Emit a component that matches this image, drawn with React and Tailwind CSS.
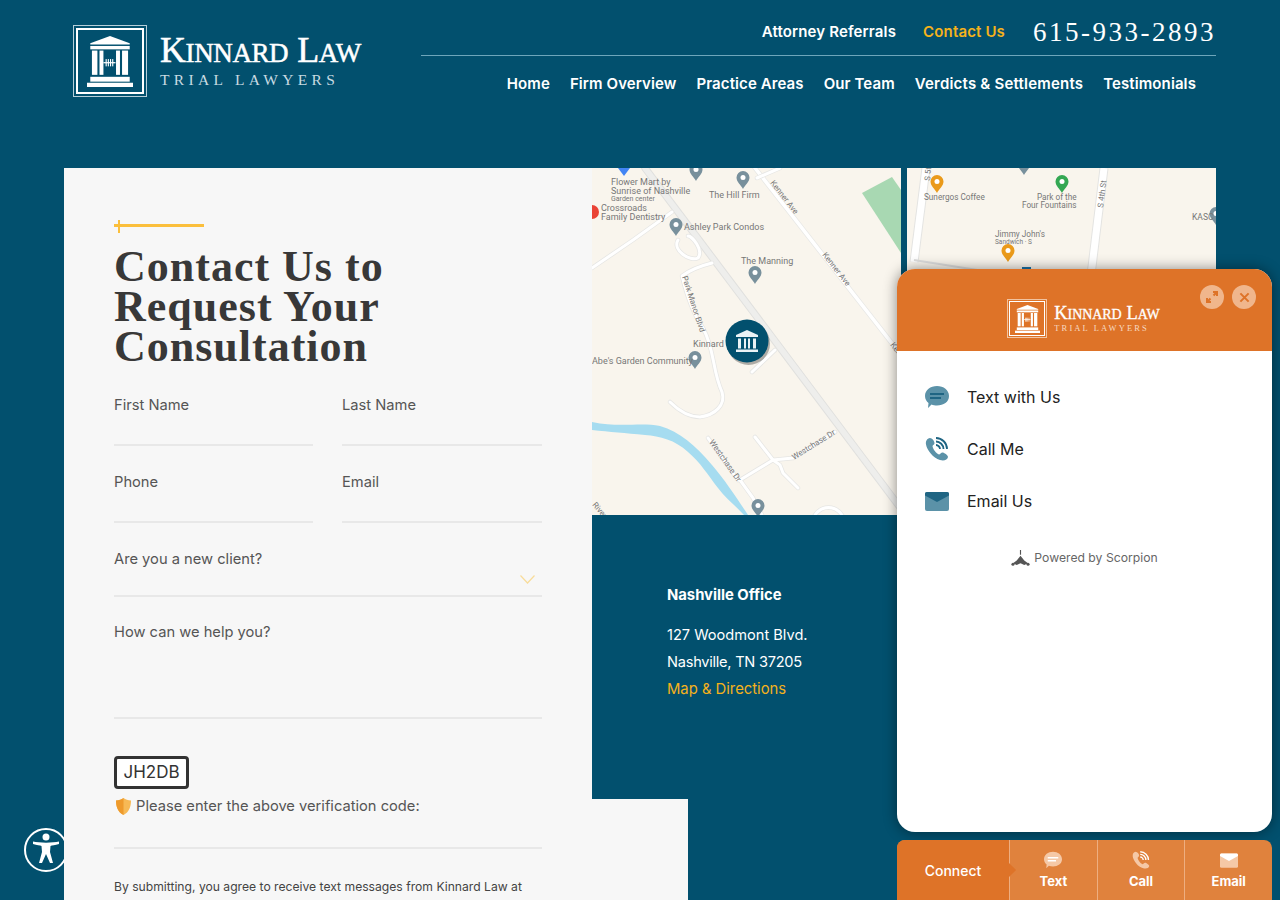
const sans = 'font-["Inter",sans-serif]';

function Temple({ className }) {
  return (
    <svg viewBox="3 5 42 42" preserveAspectRatio="none" className={className} fill="currentColor">
      <path d="M24 5 L42 11 L42 12 L6 12 L6 11 Z" />
      <rect x="6" y="13.2" width="36" height="2.8" />
      <rect x="7.5" y="17" width="5" height="20" />
      <rect x="14.4" y="17" width="3.6" height="20" />
      <rect x="29.5" y="17" width="3.6" height="20" />
      <rect x="35" y="17" width="5.5" height="20" />
      <rect x="20" y="24" width="1" height="6" />
      <rect x="22" y="24" width="1" height="6" />
      <rect x="24" y="24" width="1" height="6" />
      <rect x="26" y="24" width="1" height="6" />
      <rect x="18" y="26.5" width="11" height="1" />
      <rect x="6" y="38.6" width="36" height="4" />
      <rect x="3" y="43.5" width="42" height="3.5" />
    </svg>
  );
}

function HeaderLogo() {
  return (
    <div className="flex items-center text-white">
      <div className="w-[74px] h-[72px] border border-[#b7cfd9] p-[2px]">
        <div className="w-full h-full border-2 border-white flex items-center justify-center">
          <Temple className="w-[46px] h-[51px]" />
        </div>
      </div>
      <div className="ml-[13px] -mt-[2px] font-['Liberation_Serif',serif]">
        <div className="flex items-baseline leading-[36px] h-[34px] text-[36px] tracking-[-0.4px] [-webkit-text-stroke:0.5px_white]">
          K<span className="text-[27px]">INNARD</span>
          <span className="ml-[9px]">L</span>
          <span className="text-[27px]">AW</span>
        </div>
        <div className="text-[15.5px] leading-[16px] tracking-[4.35px] text-[#c9dbe2] mt-[6px]">TRIAL LAWYERS</div>
      </div>
    </div>
  );
}

function ChatLogo() {
  return (
    <div className="flex items-center text-white pr-[2px]">
      <div className="w-[40px] h-[39px] border border-[#f1c3a0] p-[1px]">
        <div className="w-full h-full border border-white flex items-center justify-center">
          <Temple className="w-[25px] h-[28px]" />
        </div>
      </div>
      <div className="ml-[7px] -mt-[1px] font-['Liberation_Serif',serif]">
        <div className="flex items-baseline leading-[18px] h-[17px] text-[18.5px] tracking-[-0.1px] [-webkit-text-stroke:0.3px_white]">
          K<span className="text-[14px]">INNARD</span>
          <span className="ml-[5px]">L</span>
          <span className="text-[14px]">AW</span>
        </div>
        <div className="text-[8.5px] leading-[10px] tracking-[2.1px] text-[#f7d9c2] mt-[2px]">TRIAL LAWYERS</div>
      </div>
    </div>
  );
}

function Field({ label, className, children }) {
  return (
    <div className={`border-b-2 border-[#e8e8e8] ${className}`}>
      <div className="text-[14.7px] leading-[20px] text-[#555]">{label}</div>
      {children}
    </div>
  );
}

function Pin({ x, y, color = '#78909c', s = 1 }) {
  return (
    <g transform={`translate(${x} ${y}) scale(${s})`}>
      <path d="M0 9 C-2 5 -6.5 2 -6.5 -2.5 A6.5 6.5 0 0 1 6.5 -2.5 C6.5 2 2 5 0 9 Z" fill={color} />
      <circle cx="0" cy="-2.5" r="2.5" fill="#fff" />
    </g>
  );
}

function Label({ x, y, children, size = 9, rotate, anchor, fill = '#777' }) {
  return (
    <text
      x={x}
      y={y}
      fontSize={size}
      fill={fill}
      textAnchor={anchor}
      fontFamily="Roboto, sans-serif"
      transform={rotate ? `rotate(${rotate} ${x} ${y})` : undefined}
    >
      {children}
    </text>
  );
}

const sideRoads = [
  'M592 268 L633 240 L672 212',
  'M757 178 L780 168',
  'M712 263 C700 266 690 270 682 276 C688 300 696 318 703 328 C715 350 712 370 722 392 C726 405 715 415 700 417 C688 417 678 410 670 402',
  'M678 240 C672 250 690 262 698 258 C704 250 692 236 688 236',
  'M775 350 L752 372',
  'M835 432 L793 458 L773 460 L740 480 L753 498 L762 515',
  'M755 437 L773 460 L780 465 L783 473 L798 488',
  'M708 438 L738 480',
  'M815 515 C822 505 835 505 842 515',
];

function MapLeft() {
  return (
    <svg viewBox="592 168 309 347" className="w-[309px] h-[347px] block bg-[#f9f5ed]">
      <polygon points="862,193 892,177 901,190 901,253" fill="#a8d8b2" />
      {/* water */}
      <path d="M592 422 C620 428 640 422 660 426 C680 432 695 445 712 465 C725 480 738 500 748 515 L744 515 C735 505 725 498 718 488 C708 475 700 462 688 452 C675 440 660 436 645 435 C625 433 610 432 592 430 Z" fill="#a6dcf0" />
      {/* roads */}
      <g fill="none" strokeLinecap="round" strokeLinejoin="round">
        <path d="M645 168 L905 514" stroke="#e0e0de" strokeWidth="7.5" />
        <path d="M645 168 L905 514" stroke="#eeeeec" strokeWidth="5.5" />
        <path d="M755 168 L905 360" stroke="#e8e8e6" strokeWidth="5" />
        <path d="M755 168 L905 360" stroke="#fff" strokeWidth="3.5" />
        {sideRoads.map((d) => (
          <path key={d} d={d} stroke="#e6e6e4" strokeWidth="4.5" />
        ))}
        {sideRoads.map((d) => (
          <path key={d} d={d} stroke="#fff" strokeWidth="3" />
        ))}
      </g>
      <Pin x={696} y={172} />
      <Pin x={743} y={180} />
      <Pin x={676} y={227} />
      <Pin x={755} y={275} />
      <Pin x={695} y={360} />
      <Pin x={758} y={508} />
      <path d="M618 168 L630 168 L624 176 Z" fill="#4285f4" />
      <circle cx="592" cy="212" r="7" fill="#ea4335" />
      <Label x={611} y={185}>Flower Mart by</Label>
      <Label x={611} y={194}>Sunrise of Nashville</Label>
      <Label x={611} y={201} size={7}>Garden center</Label>
      <Label x={601} y={211}>Crossroads</Label>
      <Label x={601} y={220}>Family Dentistry</Label>
      <Label x={709} y={198}>The Hill Firm</Label>
      <Label x={684} y={230}>Ashley Park Condos</Label>
      <Label x={741} y={264}>The Manning</Label>
      <Label x={693} y={347}>Kinnard</Label>
      <Label x={592} y={364}>Abe's Garden Community</Label>
      <Label x={682} y={277} size={8} rotate={72}>Park Manor Blvd</Label>
      <Label x={770} y={183} size={8} rotate={52}>Kenner Ave</Label>
      <Label x={822} y={255} size={8} rotate={52}>Kenner Ave</Label>
      <Label x={890} y={345} size={8} rotate={52}>Kenner Ave</Label>
      <Label x={709} y={442} size={8} rotate={55}>Westchase Dr</Label>
      <Label x={794} y={460} size={8} rotate={-32}>Westchase Dr</Label>
      <Label x={592} y={505} size={8} rotate={50}>River</Label>
      <circle cx="748.5" cy="343.5" r="21.5" fill="#000" opacity="0.3" />
      <circle cx="747" cy="341" r="21.5" fill="#02506e" />
      <g transform="translate(735 329)" fill="#eaf2f5">
        <path d="M12 1 L23 6 L23 8 L1 8 L1 6 Z" />
        <rect x="3" y="9.5" width="3" height="10" />
        <rect x="9" y="9.5" width="2" height="10" />
        <rect x="13" y="9.5" width="2" height="10" />
        <rect x="18" y="9.5" width="3" height="10" />
        <rect x="1" y="20.5" width="22" height="2.5" />
      </g>
    </svg>
  );
}

function MapRight() {
  return (
    <svg viewBox="907 168 309 347" className="w-[309px] h-[347px] block bg-[#f9f5ed]">
      <g fill="none" strokeLinecap="butt">
        <path d="M926 168 L914 262" stroke="#e4e4e2" strokeWidth="9" />
        <path d="M926 168 L914 262" stroke="#fff" strokeWidth="7" />
        <path d="M1104 168 L1091 275" stroke="#e4e4e2" strokeWidth="9" />
        <path d="M1104 168 L1091 275" stroke="#fff" strokeWidth="7" />
        <path d="M914 260 L990 272" stroke="#ddd" strokeWidth="2" />
      </g>
      <Pin x={1024} y={166} />
      <Pin x={937} y={184} color="#ea9a1a" />
      <Pin x={1062} y={184} color="#34a853" />
      <Pin x={1008} y={253} color="#ea9a1a" />
      <Pin x={1216} y={216} />
      <rect x="1022" y="267" width="9" height="6" fill="#1a73a8" />
      <Label x={924} y={200} size={8.2}>Sunergos Coffee</Label>
      <Label x={1037} y={200} size={8.2}>Park of the</Label>
      <Label x={1022} y={208} size={8.2}>Four Fountains</Label>
      <Label x={995} y={237} size={8.2}>Jimmy John's</Label>
      <Label x={995} y={244} size={6.5}>Sandwich · S</Label>
      <Label x={1192} y={220} size={8.5}>KASC</Label>
      <Label x={930} y={181} size={8} rotate={-85}>S 5th</Label>
      <Label x={1103} y={208} size={8} rotate={-83}>S 4th St</Label>
    </svg>
  );
}

function TextIcon({ className, fill = '#5b92a8', line = '#1f6583' }) {
  return (
    <svg viewBox="0 0 24 24" className={className}>
      <path d="M12 1 C18.5 1 24 5 24 11 C24 17 18.5 20.5 12 20.5 C10 20.5 8 20.2 6.5 19.5 L3 23 L3.5 18 C1.5 16.5 0 14 0 11 C0 5 5.5 1 12 1 Z" fill={fill} />
      <rect x="5" y="8" width="14" height="2" fill={line} />
      <rect x="5" y="12" width="11" height="2" fill={line} />
    </svg>
  );
}

function CallIcon({ className, fill = '#5b92a8', line = '#1f6583' }) {
  return (
    <svg viewBox="0 0 24 24" className={className}>
      <path d="M5 1 C2 1.5 0.5 4 1 7.5 C2 13 8 21 15 23 C19 24 22.5 23 23 20 C23 18 19 15.5 17.5 15.5 C16 15.5 15 17.5 14 17.5 C11.5 17 7.5 11.5 7.5 9 C8 8 9.5 7.5 9.5 6 C9.5 4 7 1 5 1 Z" fill={fill} />
      <g fill="none" stroke={line} strokeWidth="1.8">
        <path d="M11 8 C13 8 15 10 15 12" />
        <path d="M11 4.5 C15 4.5 18.5 8 18.5 12" />
        <path d="M11 1 C17 1 22 6 22 12" />
      </g>
    </svg>
  );
}

function MailIcon({ className, fill = '#5b92a8', flap = '#1f6583' }) {
  return (
    <svg viewBox="0 0 24 19" className={className}>
      <rect x="0" y="0" width="24" height="19" rx="2" fill={fill} />
      <path d="M2 0 L22 0 C23.2 0 24 0.8 24 2 L24 3.5 L12 10 L0 3.5 L0 2 C0 0.8 0.8 0 2 0 Z" fill={flap} />
    </svg>
  );
}

function ChatRow({ icon, label }) {
  return (
    <div className="flex items-center h-[52px]">
      <div className="w-[24px] flex justify-center">{icon}</div>
      <span className="ml-[18px] text-[16px] text-[#222]">{label}</span>
    </div>
  );
}

function BarButton({ icon, label }) {
  return (
    <div className="flex-1 border-l border-[#eeae80] flex flex-col items-center pt-[11px]">
      <div className="h-[18px] flex items-center">{icon}</div>
      <span className="text-[13px] leading-[16px] font-bold text-white mt-[4px]">{label}</span>
    </div>
  );
}

export default function App() {
  return (
    <div className={`w-[1280px] h-[900px] overflow-hidden relative bg-[#02506e] ${sans}`}>
      {/* Header */}
      <header className="h-[168px] pl-[73px] pr-[64px] flex items-start">
        <div className="mt-[25px] w-[348px]">
          <HeaderLogo />
        </div>
        <div className="flex-1">
          <div className="h-[56px] border-b border-[#6ea6bb] flex items-center justify-end pt-[10px]">
            <a className="text-[15px] tracking-[0.15px] font-semibold text-white">Attorney Referrals</a>
            <a className="ml-[27px] text-[15px] tracking-[0.15px] font-semibold text-[#f5b21b]">Contact Us</a>
            <a className="ml-[28px] text-[27px] font-['Liberation_Serif',serif] tracking-[2.5px] text-white">615-933-2893</a>
          </div>
          <nav className="mt-[18px] pr-[20px] flex justify-end gap-[20px] text-[15px] tracking-[0.1px] font-semibold text-white leading-[20px]">
            <a>Home</a>
            <a>Firm Overview</a>
            <a>Practice Areas</a>
            <a>Our Team</a>
            <a className="tracking-[0.2px]">Verdicts &amp; Settlements</a>
            <a>Testimonials</a>
          </nav>
        </div>
      </header>

      {/* Accessibility button, sits under the form card */}
      <div className="absolute left-[24px] top-[828px] w-[44px] h-[44px] rounded-full border-2 border-white">
        <svg viewBox="0 0 40 40" className="w-[40px] h-[40px]" fill="#fff">
          <circle cx="20" cy="7" r="3.5" />
          <path d="M7 11.5 C13 13 27 13 33 11.5 L33 14 C29 15 26 15.5 24.5 16 L24 22 L27 33 L24 33 L20 24 L16 33 L13 33 L16 22 L15.5 16 C14 15.5 11 15 7 14 Z" />
        </svg>
      </div>

      {/* Main */}
      <main className="flex pl-[64px]">
        <section className="w-[624px] h-[732px] bg-[#f7f7f7] pl-[50px] pr-[146px] pt-[56px] relative z-10">
          <div className="relative h-[3px] w-[90px] bg-[#fbbf3c]">
            <div className="absolute left-[4px] -top-[4px] w-[2px] h-[13px] bg-[#fbbf3c]" />
          </div>
          <h1 className="mt-[20px] font-['Liberation_Serif',serif] font-bold text-[44px] leading-[40px] tracking-[1px] text-[#383838]">
            Contact Us to
            <br />
            Request Your
            <br />
            Consultation
          </h1>
          <div className="mt-[28px] grid grid-cols-[199px_200px] gap-x-[29px]">
            <Field label="First Name" className="h-[51px]" />
            <Field label="Last Name" className="h-[51px]" />
            <Field label="Phone" className="h-[51px] mt-[26px]" />
            <Field label="Email" className="h-[51px] mt-[26px]" />
          </div>
          <Field label="Are you a new client?" className="mt-[26px] h-[48px] relative">
            <svg viewBox="0 0 15 9" className="absolute right-[7px] top-[26px] w-[15px] h-[9px]" fill="none" stroke="#f8dc9a" strokeWidth="1.2">
              <path d="M0.5 0.5 L7.5 8 L14.5 0.5" />
            </svg>
          </Field>
          <Field label="How can we help you?" className="mt-[25px] h-[97px]" />
          <div className="mt-[37px] w-[75px] h-[33px] border-[3px] border-[#333] rounded-[4px] bg-white flex items-center justify-center text-[17px] text-[#333]">
            JH2DB
          </div>
          <div className="mt-[7px] flex items-center h-[20px]">
            <svg viewBox="0 0 16 18" className="ml-[2px] w-[15px] h-[17px]">
              <path d="M8 0 C10 1.5 13 2.5 16 2.5 C16 9 14 15 8 18 C2 15 0 9 0 2.5 C3 2.5 6 1.5 8 0 Z" fill="#f7b955" />
              <path d="M8 0 C6 1.5 3 2.5 0 2.5 C0 9 2 15 8 18 Z" fill="#ee9a2c" />
            </svg>
            <span className="ml-[5px] text-[14.7px] text-[#555]">Please enter the above verification code:</span>
          </div>
          <div className="mt-[31px] border-b-2 border-[#e8e8e8]" />
          <p className="mt-[28px] text-[12.15px] leading-[20px] text-[#444] whitespace-nowrap">
            By submitting, you agree to receive text messages from Kinnard Law at
          </p>
        </section>
        <section className="w-[624px] -ml-[96px] relative z-10">
          <div className="flex justify-between">
            <MapLeft />
            <MapRight />
          </div>
          <div className="h-[284px] bg-[#02506e] pl-[75px] pt-[70px] text-white text-[14.6px] leading-[27px]">
            <div className="font-bold text-[14.8px] leading-[20px]">Nashville Office</div>
            <div className="mt-[17px]">127 Woodmont Blvd.</div>
            <div className="tracking-[-0.25px]">Nashville, TN 37205</div>
            <a className="block text-[#f5b21b] text-[14.8px]">Map &amp; Directions</a>
          </div>
        </section>
      </main>

      {/* Chat panel */}
      <div className="absolute z-20 left-[897px] top-[269px] w-[375px] h-[563px] rounded-[18px] bg-white overflow-hidden shadow-[0_0_14px_rgba(0,0,0,0.45)]">
        <div className="h-[82px] bg-[#de7328] relative flex items-center justify-center pt-[17px]">
          <ChatLogo />
          <div className="absolute right-[16px] top-[16px] flex gap-[8px]">
            <div className="w-[24px] h-[24px] rounded-full bg-[#f0b68c] flex items-center justify-center">
              <svg viewBox="0 0 12 12" className="w-[12px] h-[12px]" fill="none" stroke="#de7328" strokeWidth="2">
                <path d="M7 1 H11 V5 M11 1 L7.5 4.5 M1 7 V11 H5 M1 11 L4.5 7.5" />
              </svg>
            </div>
            <div className="w-[24px] h-[24px] rounded-full bg-[#f0b68c] flex items-center justify-center">
              <svg viewBox="0 0 12 12" className="w-[11px] h-[11px]" fill="none" stroke="#de7328" strokeWidth="2.2">
                <path d="M1.5 1.5 L10.5 10.5 M10.5 1.5 L1.5 10.5" />
              </svg>
            </div>
          </div>
        </div>
        <div className="pl-[28px] pt-[20px]">
          <ChatRow label="Text with Us" icon={<TextIcon className="w-[24px] h-[24px]" />} />
          <ChatRow label="Call Me" icon={<CallIcon className="w-[24px] h-[24px]" />} />
          <ChatRow label="Email Us" icon={<MailIcon className="w-[24px] h-[19px]" />} />
        </div>
        <div className="mt-[22px] flex items-center justify-center text-[12.2px] text-[#666]">
          <svg viewBox="0 0 20 18" className="w-[19px] h-[17px]" fill="#555">
            <rect x="9.4" y="0" width="1.2" height="5" />
            <path d="M10 6 L14 11 L18 14 L14 16 L10 14 L6 16 L2 14 L6 11 Z" />
            <circle cx="2" cy="15" r="1.6" />
            <circle cx="18" cy="15" r="1.6" />
          </svg>
          <span className="ml-[4px]">Powered by Scorpion</span>
        </div>
      </div>

      {/* Connect bar */}
      <div className="absolute z-20 left-[897px] top-[840px] w-[375px] h-[60px] rounded-t-[8px] overflow-hidden bg-[#e0823d] flex text-white">
        <div className="w-[112px] bg-[#de7328] relative flex items-center justify-center text-[14px] font-medium">
          Connect
          <div className="absolute -right-[5px] top-[25px] w-[10px] h-[10px] bg-[#de7328] rotate-45" />
        </div>
        <BarButton label="Text" icon={<TextIcon className="w-[18px] h-[18px]" fill="#f5c8a6" line="#fff" />} />
        <BarButton label="Call" icon={<CallIcon className="w-[18px] h-[18px]" fill="#f5c8a6" line="#fff" />} />
        <BarButton label="Email" icon={<MailIcon className="w-[18px] h-[15px]" fill="#f5c8a6" flap="#fff" />} />
      </div>
    </div>
  );
}
